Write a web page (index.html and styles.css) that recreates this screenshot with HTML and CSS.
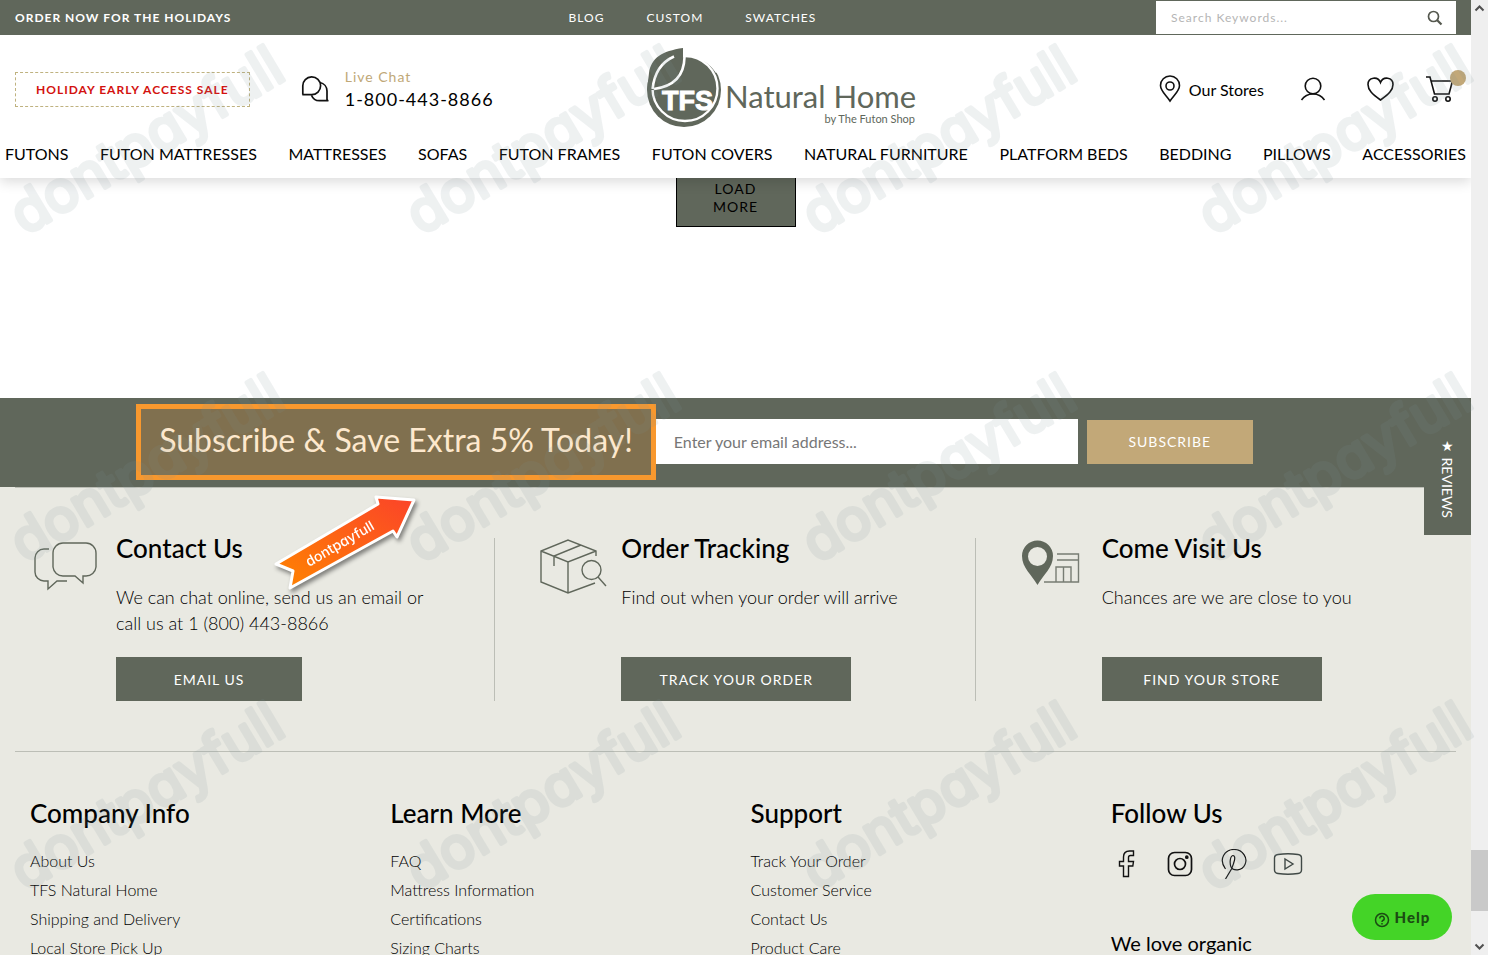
FILE: index.html
```html
<!DOCTYPE html>
<html lang="en">
<head>
<meta charset="utf-8">
<title>TFS Natural Home</title>
<link rel="stylesheet" href="styles.css">
</head>
<body>
<div class="window">
  <div class="page">
    <header class="site-header">
      <div class="topbar">
        <strong class="topbar-note">ORDER NOW FOR THE HOLIDAYS</strong>
        <nav class="topbar-links" aria-label="Secondary">
          <a href="#">BLOG</a><a href="#">CUSTOM</a><a href="#">SWATCHES</a>
        </nav>
        <form class="search">
          <input type="search" aria-label="Search" placeholder="Search Keywords...">
          <button type="button" aria-label="Search">
            <svg width="16" height="16" viewBox="0 0 16 16" fill="none" stroke="#55584f" stroke-width="1.7"><circle cx="6.5" cy="6.5" r="5"/><path d="M10 10l4.500 4.500" stroke-width="2.200"/></svg>
          </button>
        </form>
      </div>
      <div class="masthead">
        <div class="masthead-left">
          <a class="sale" href="#">HOLIDAY EARLY ACCESS SALE</a>
          <div class="chat">
            <svg width="28" height="26" viewBox="0 0 28 26" fill="none" stroke="#111" stroke-width="1.700" stroke-linejoin="round"><path d="M1.800 18.500V10a8.900 8.900 0 1 1 8.900 8.700H1.300"/><path d="M19 6.500a8.800 8.800 0 0 1 7 8.500v8.500l.8 1.200H18.500a8.500 8.500 0 0 1-8-5.500"/></svg>
            <div class="chat-text"><a class="chat-link" href="#">Live Chat</a><a class="phone" href="#">1-800-443-8866</a></div>
          </div>
        </div>
        <a class="logo" href="#" aria-label="TFS Natural Home">
          <svg width="270" height="80" viewBox="0 2 270 80">
            <circle cx="37" cy="43" r="37" fill="#60675b"/>
            <path fill="#fff" d="M36 0V10Q58 9 69 26L78 20V0z"/>
            <circle cx="38" cy="41.500" r="32.500" fill="#60675b" stroke="#fff" stroke-width="2.400"/>
            <path fill="#60675b" d="M36 1C15 4 4 11 2 26L0 43H6.500C8 40 34 40 36 10z"/>
            <path fill="none" stroke="#fff" stroke-width="2.600" d="M27 9.500Q8 18 5.600 42"/>
            <path fill="none" stroke="#fff" stroke-width="2.600" d="M37.500 1V10Q37 38 7 42"/>
            <text class="logo-mark" x="15" y="63">TFS</text>
            <text class="logo-name" x="78" y="61">Natural Home</text>
            <text class="logo-sub" x="268" y="76" text-anchor="end">by The Futon Shop</text>
          </svg>
        </a>
        <div class="masthead-right">
          <a class="stores" href="#">
            <svg width="22" height="28" viewBox="0 0 22 28" fill="none" stroke="#111" stroke-width="1.600"><path d="M11 26C7 20 1.500 16 1.500 10.500a9.500 9.500 0 0 1 19 0C20.500 16 15 20 11 26z"/><circle cx="11" cy="11" r="4"/></svg>
            <span>Our Stores</span>
          </a>
          <a class="account" href="#" aria-label="Account"><svg width="26" height="24" viewBox="0 0 26 24" fill="none" stroke="#111" stroke-width="1.600"><circle cx="13" cy="9" r="7.800"/><path d="M1.500 23C7 15 19 15 24.500 23"/></svg></a>
          <a class="wishlist" href="#" aria-label="Wish list"><svg width="27" height="24" viewBox="0 0 27 24" fill="none" stroke="#111" stroke-width="1.600"><path d="M13.500 23C5 17 1 13 1 7.500C1 0 11 -1 13.500 5.500C16 -1 26 0 26 7.500C26 13 22 17 13.500 23z"/></svg></a>
          <a class="cart" href="#" aria-label="Cart"><svg width="28" height="28" viewBox="0 0 28 28" fill="none" stroke="#111" stroke-width="1.600"><path d="M0 2h4l4.500 17H23L26.500 6H5"/><circle cx="9" cy="24" r="2.200"/><circle cx="22" cy="24" r="2.200"/></svg><span class="cart-badge"></span></a>
        </div>
      </div>
      <nav class="main-nav" aria-label="Main">
        <a href="#">FUTONS</a><a href="#">FUTON MATTRESSES</a><a href="#">MATTRESSES</a><a href="#">SOFAS</a><a href="#">FUTON FRAMES</a><a href="#">FUTON COVERS</a><a href="#">NATURAL FURNITURE</a><a href="#">PLATFORM BEDS</a><a href="#">BEDDING</a><a href="#">PILLOWS</a><a href="#">ACCESSORIES</a>
      </nav>
    </header>

    <main class="listing"><button class="load-more" type="button">LOAD MORE</button></main>

    <footer class="footer">
      <form class="subscribe">
        <label class="subscribe-title" for="email">Subscribe &amp; Save Extra 5% Today!</label>
        <input class="subscribe-input" id="email" type="email" placeholder="Enter your email address...">
        <button class="subscribe-button" type="button">SUBSCRIBE</button>
      </form>
      <div class="services">
        <section class="service">
          <svg class="service-icon" width="67" height="56" viewBox="0 0 67 56" fill="none" stroke="#60675b" stroke-width="1.400"><path d="M28 4h23a10 10 0 0 1 10 10v14a10 10 0 0 1-10 9h-3v7l-8-7H28a10 10 0 0 1-10-9V14A10 10 0 0 1 28 4z"/><path d="M14 10H9a9 9 0 0 0-9 9v14a9 9 0 0 0 9 9h4v8l9-8h10"/></svg>
          <div class="service-body"><h2>Contact Us</h2><p>We can chat online, send us an email or<br>call us at 1 (800) 443-8866</p><button class="service-button email" type="button">EMAIL US</button></div>
        </section>
        <section class="service">
          <svg class="service-icon" width="67" height="56" viewBox="0 0 67 56" fill="none" stroke="#60675b" stroke-width="1.400"><path d="M56 17V12L28 1 1 12v31l27 11 27-10M1 12l27 11 28-11M28 23v31M41 6L14 17v10"/><circle cx="51.500" cy="31" r="9.500"/><path d="M58 38l8 9"/></svg>
          <div class="service-body"><h2>Order Tracking</h2><p>Find out when your order will arrive</p><button class="service-button track" type="button">TRACK YOUR ORDER</button></div>
        </section>
        <section class="service">
          <svg class="service-icon" width="67" height="56" viewBox="0 0 67 56" fill="none" stroke="#777c73" stroke-width="1.400"><path fill="#60675b" stroke="none" fill-rule="evenodd" d="M16.500 46C11 36 1 29 1 17a15.500 15.500 0 0 1 31 0c0 12-10 19-15.500 29zM16.500 8a9.500 9.500 0 1 0 0 19a9.500 9.500 0 0 0 0-19z"/><path d="M36 15h21.500v28H23M36 21h21M35 43V28h15v15M42.500 28v15"/></svg>
          <div class="service-body"><h2>Come Visit Us</h2><p>Chances are we are close to you</p><button class="service-button find" type="button">FIND YOUR STORE</button></div>
        </section>
      </div>
      <div class="link-columns">
        <section><h2>Company Info</h2><ul><li><a href="#">About Us</a></li><li><a href="#">TFS Natural Home</a></li><li><a href="#">Shipping and Delivery</a></li><li><a href="#">Local Store Pick Up</a></li></ul></section>
        <section><h2>Learn More</h2><ul><li><a href="#">FAQ</a></li><li><a href="#">Mattress Information</a></li><li><a href="#">Certifications</a></li><li><a href="#">Sizing Charts</a></li></ul></section>
        <section><h2>Support</h2><ul><li><a href="#">Track Your Order</a></li><li><a href="#">Customer Service</a></li><li><a href="#">Contact Us</a></li><li><a href="#">Product Care</a></li></ul></section>
        <section><h2>Follow Us</h2>
          <div class="social">
            <a href="#" aria-label="Facebook"><svg width="30" height="30" viewBox="0 0 30 30" fill="none" stroke="#111" stroke-width="1.400"><path d="M12.500 27.500V17H8.500v-4.500h4V8c0-4 2.500-6 6-6h4v4.500h-3c-1.500 0-2 .8-2 2v4h5l-.7 4.500h-4.300v10.500z"/></svg></a>
            <a href="#" aria-label="Instagram"><svg width="30" height="30" viewBox="0 0 30 30" fill="none" stroke="#111" stroke-width="1.700"><rect x="3.500" y="3.500" width="23" height="23" rx="6"/><circle cx="15" cy="15" r="5.500"/><circle cx="21.800" cy="8.200" r="1" fill="#111"/></svg></a>
            <a href="#" aria-label="Pinterest"><svg width="30" height="30" viewBox="0 0 30 30" fill="none" stroke="#111" stroke-width="1.200"><path d="M6.500 20C-1 10 6 0.500 15 0.500C24 0.500 29 9 26 15.500C23 22 14.500 22.500 12 18C10.500 14 11 7 14 6.500C17.500 7 15 14 12.500 20L6.500 30"/></svg></a>
            <a href="#" aria-label="YouTube"><svg width="30" height="30" viewBox="0 0 30 30" fill="none" stroke="#404946" stroke-width="1.400"><path d="M5 5.500Q15 4 25 5.500Q28.500 6 28.500 9V21Q28.500 24 25 24.500Q15 26 5 24.500Q1.500 24 1.500 21V9Q1.500 6 5 5.500zM12 10v10l8-5z"/></svg></a>
          </div>
          <h3>We love organic</h3>
        </section>
      </div>
    </footer>

    <button class="reviews" type="button">★ REVIEWS</button>
    <button class="help" type="button"><svg width="16" height="16" viewBox="0 0 16 16" fill="none" stroke="#1b4b13" stroke-width="1.500"><circle cx="8" cy="8" r="6.500"/><path d="M5.800 6.500a2.200 2.200 0 1 1 3 2Q8 9 8 10M8 11v1.500"/></svg>Help</button>
  </div>
  <div class="scrollbar" aria-hidden="true">
    <svg width="17" height="17" viewBox="0 0 17 17" fill="none" stroke="#505050" stroke-width="2"><path d="M4.500 10.500l4-4 4 4"/></svg>
    <span class="scroll-thumb"></span>
    <svg width="17" height="17" viewBox="0 0 17 17" fill="none" stroke="#505050" stroke-width="2"><path d="M4.500 6.500l4 4 4-4"/></svg>
  </div>
  <svg class="watermark" aria-hidden="true">
    <defs><pattern id="marks" width="396" height="328" patternUnits="userSpaceOnUse"><text class="mark-text" transform="translate(25 236) rotate(-31)">dontpayfull</text></pattern></defs>
    <rect width="100%" height="100%" fill="url(#marks)"/>
  </svg>
  <svg class="arrow" width="160" height="120" viewBox="266 486 160 120" aria-hidden="true">
    <defs><linearGradient id="flame" x1="0" x2="1" y1="1" y2="0"><stop offset="0" stop-color="#ff8500"/><stop offset="1" stop-color="#fb4329"/></linearGradient></defs>
    <path d="M376 497L414 500 397 537 393 531 290 588 293 571 276 564 378 504z" fill="url(#flame)" stroke="#fff" stroke-width="3" stroke-linejoin="round"/>
    <text class="arrow-text" transform="translate(309 567) rotate(-30)">dontpayfull</text>
  </svg>
</div>
</body>
</html>
```

FILE: styles.css
```css
* { box-sizing: border-box; }
body { margin: 0; font-family: Lato, "Open Sans", sans-serif; font-size: 16px; color: #000; background: #fff; }
a { color: inherit; text-decoration: none; }
h2, h3, p, ul { margin: 0; padding: 0; }
ul { list-style: none; }
button, input { font-family: inherit; border: 0; border-radius: 0; }
svg { display: block; flex: none; }

.window { position: relative; display: flex; height: 100vh; overflow: hidden; }
.page { position: relative; flex: 1; min-width: 0; overflow: hidden; }

.site-header { position: relative; z-index: 1; background: #fff; box-shadow: 0 4px 12px rgba(0, 0, 0, .14); }
.topbar { display: grid; grid-template-columns: 553fr auto 639fr; align-items: center; height: 35px; padding: 0 15px; background: #60675b; color: #fff; font-size: 12px; letter-spacing: 1px; }
.topbar-links { display: flex; gap: 42px; }
.search { display: flex; justify-self: end; width: 300px; height: 33px; background: #fff; }
.search input { flex: 1; min-width: 0; padding: 0 15px; font-size: 12px; letter-spacing: 1px; background: none; }
.search input::placeholder { color: #b5b5b5; }
.search button { display: flex; align-items: center; padding: 0 13px; background: none; }

.masthead { display: grid; grid-template-columns: 54fr 270px 46fr; align-items: center; padding: 14px 15px 1px; }
.masthead-left { display: flex; align-items: center; gap: 51px; }
.sale { padding: 8px 20px; border: 1px dashed #bfb27f; color: #d3120f; font-size: 12px; font-weight: 700; line-height: 17px; letter-spacing: 1px; white-space: nowrap; }
.chat { display: flex; align-items: center; gap: 16px; }
.chat-text { display: flex; flex-direction: column; letter-spacing: 1px; }
.chat-link { color: #c0a877; font-size: 14px; line-height: 20px; }
.phone { font-size: 18px; line-height: 24px; }
.logo svg { overflow: visible; }
.logo-mark { font: 700 27px "Liberation Sans", Arial, sans-serif; fill: #fff; stroke: #fff; stroke-width: 1px; }
.logo-name { font-size: 31px; fill: #60675b; }
.logo-sub { font-size: 11px; fill: #60675b; }
.masthead-right { display: flex; align-items: center; justify-content: flex-end; }
.stores { display: flex; align-items: center; gap: 8px; }
.account { margin-left: 36px; }
.wishlist { margin-left: 41px; }
.cart { position: relative; margin-left: 32px; margin-right: 2px; }
.cart-badge { position: absolute; top: -5px; right: -12px; width: 16px; height: 16px; border-radius: 50%; background: #c2a878; }

.main-nav { display: flex; justify-content: space-between; padding: 12px 5px; line-height: 24px; white-space: nowrap; }

.listing { display: flex; justify-content: center; align-items: flex-start; min-height: 220px; }
.load-more { width: 120px; padding: 2px 30px 10px; border: 1px solid #000; border-top: 0; background: #60675b; color: #000; font-size: 14px; line-height: 18px; letter-spacing: 1px; }

.footer { background: #e9e9e2; }
.subscribe { display: flex; align-items: center; justify-content: center; height: 89px; padding: 0 82px 2px 0; background: #60675b; }
.subscribe-title { height: 76px; padding: 0 18px; border: 5px solid #f8982e; background: #80704f; color: #fde8cd; font-size: 32px; line-height: 62px; white-space: nowrap; }
.subscribe-input { width: 422px; height: 45px; padding: 0 18px; background: #fff; font-size: 16px; }
.subscribe-input::placeholder { color: #777; }
.subscribe-button { width: 166px; height: 44px; margin-left: 9px; background: #c2a878; color: #fff; font-size: 14px; letter-spacing: 1px; }

.services { display: grid; grid-template-columns: repeat(3, 1fr); margin: 0 15px; padding: 50px 0; border: solid #bcbeb6; border-width: 1px 0; }
.service { display: flex; gap: 14px; min-height: 163px; padding-left: 45px; border-right: 1px solid #bcbeb6; }
.service:first-child { padding-left: 20px; }
.service:last-child { border-right: 0; }
.service-icon { margin-top: 1px; overflow: visible; }
.service-body { display: flex; flex-direction: column; align-items: flex-start; }
.footer h2 { font-size: 26px; font-weight: 500; line-height: 20px; }
.service p { margin: 26px 0 21px; min-height: 52px; font-size: 18px; font-weight: 300; line-height: 26px; white-space: nowrap; }
.service-button { height: 44px; background: #60675b; color: #fff; font-size: 14px; letter-spacing: 1px; }
.email { width: 186px; }
.track { width: 230px; }
.find { width: 220px; }

.link-columns { display: grid; grid-template-columns: repeat(4, 1fr); padding: 51px 0 40px 30px; }
.link-columns ul { margin-top: 23px; font-weight: 300; line-height: 29px; }
.social { display: flex; gap: 24px; margin-top: 26px; }
.footer h3 { margin-top: 50px; font-size: 20px; font-weight: 400; line-height: 28px; }

.reviews { position: absolute; top: 421px; right: 0; width: 47px; height: 114px; padding: 0; background: #60675b; color: #fff; font-size: 14px; writing-mode: vertical-rl; }
.help { position: absolute; right: 19px; bottom: 15px; display: flex; align-items: center; justify-content: center; gap: 5px; width: 100px; height: 46px; border-radius: 23px; background: #44d427; color: #1b4b13; font-size: 15px; font-weight: 900; letter-spacing: 1px; }
.help svg { margin-top: 5px; }

.scrollbar { display: flex; flex-direction: column; width: 17px; background: #efefef; }
.scroll-thumb { height: 61px; margin-top: auto; margin-bottom: 27px; background: #c9c9c9; }

.arrow { position: absolute; left: 266px; top: 486px; z-index: 3; filter: drop-shadow(2px 3px 2px rgba(0, 0, 0, .45)); }
.arrow-text { font: 500 14px Inter, sans-serif; font-feature-settings: "cv11"; fill: #fff; }
.watermark { position: absolute; inset: 0; z-index: 2; width: 100%; height: 100%; pointer-events: none; opacity: .12; }
.mark-text { font: 400 57px Inter, sans-serif; font-feature-settings: "cv11"; fill: #7b9096; stroke: #7b9096; stroke-width: 4px; stroke-linejoin: round; }
```
